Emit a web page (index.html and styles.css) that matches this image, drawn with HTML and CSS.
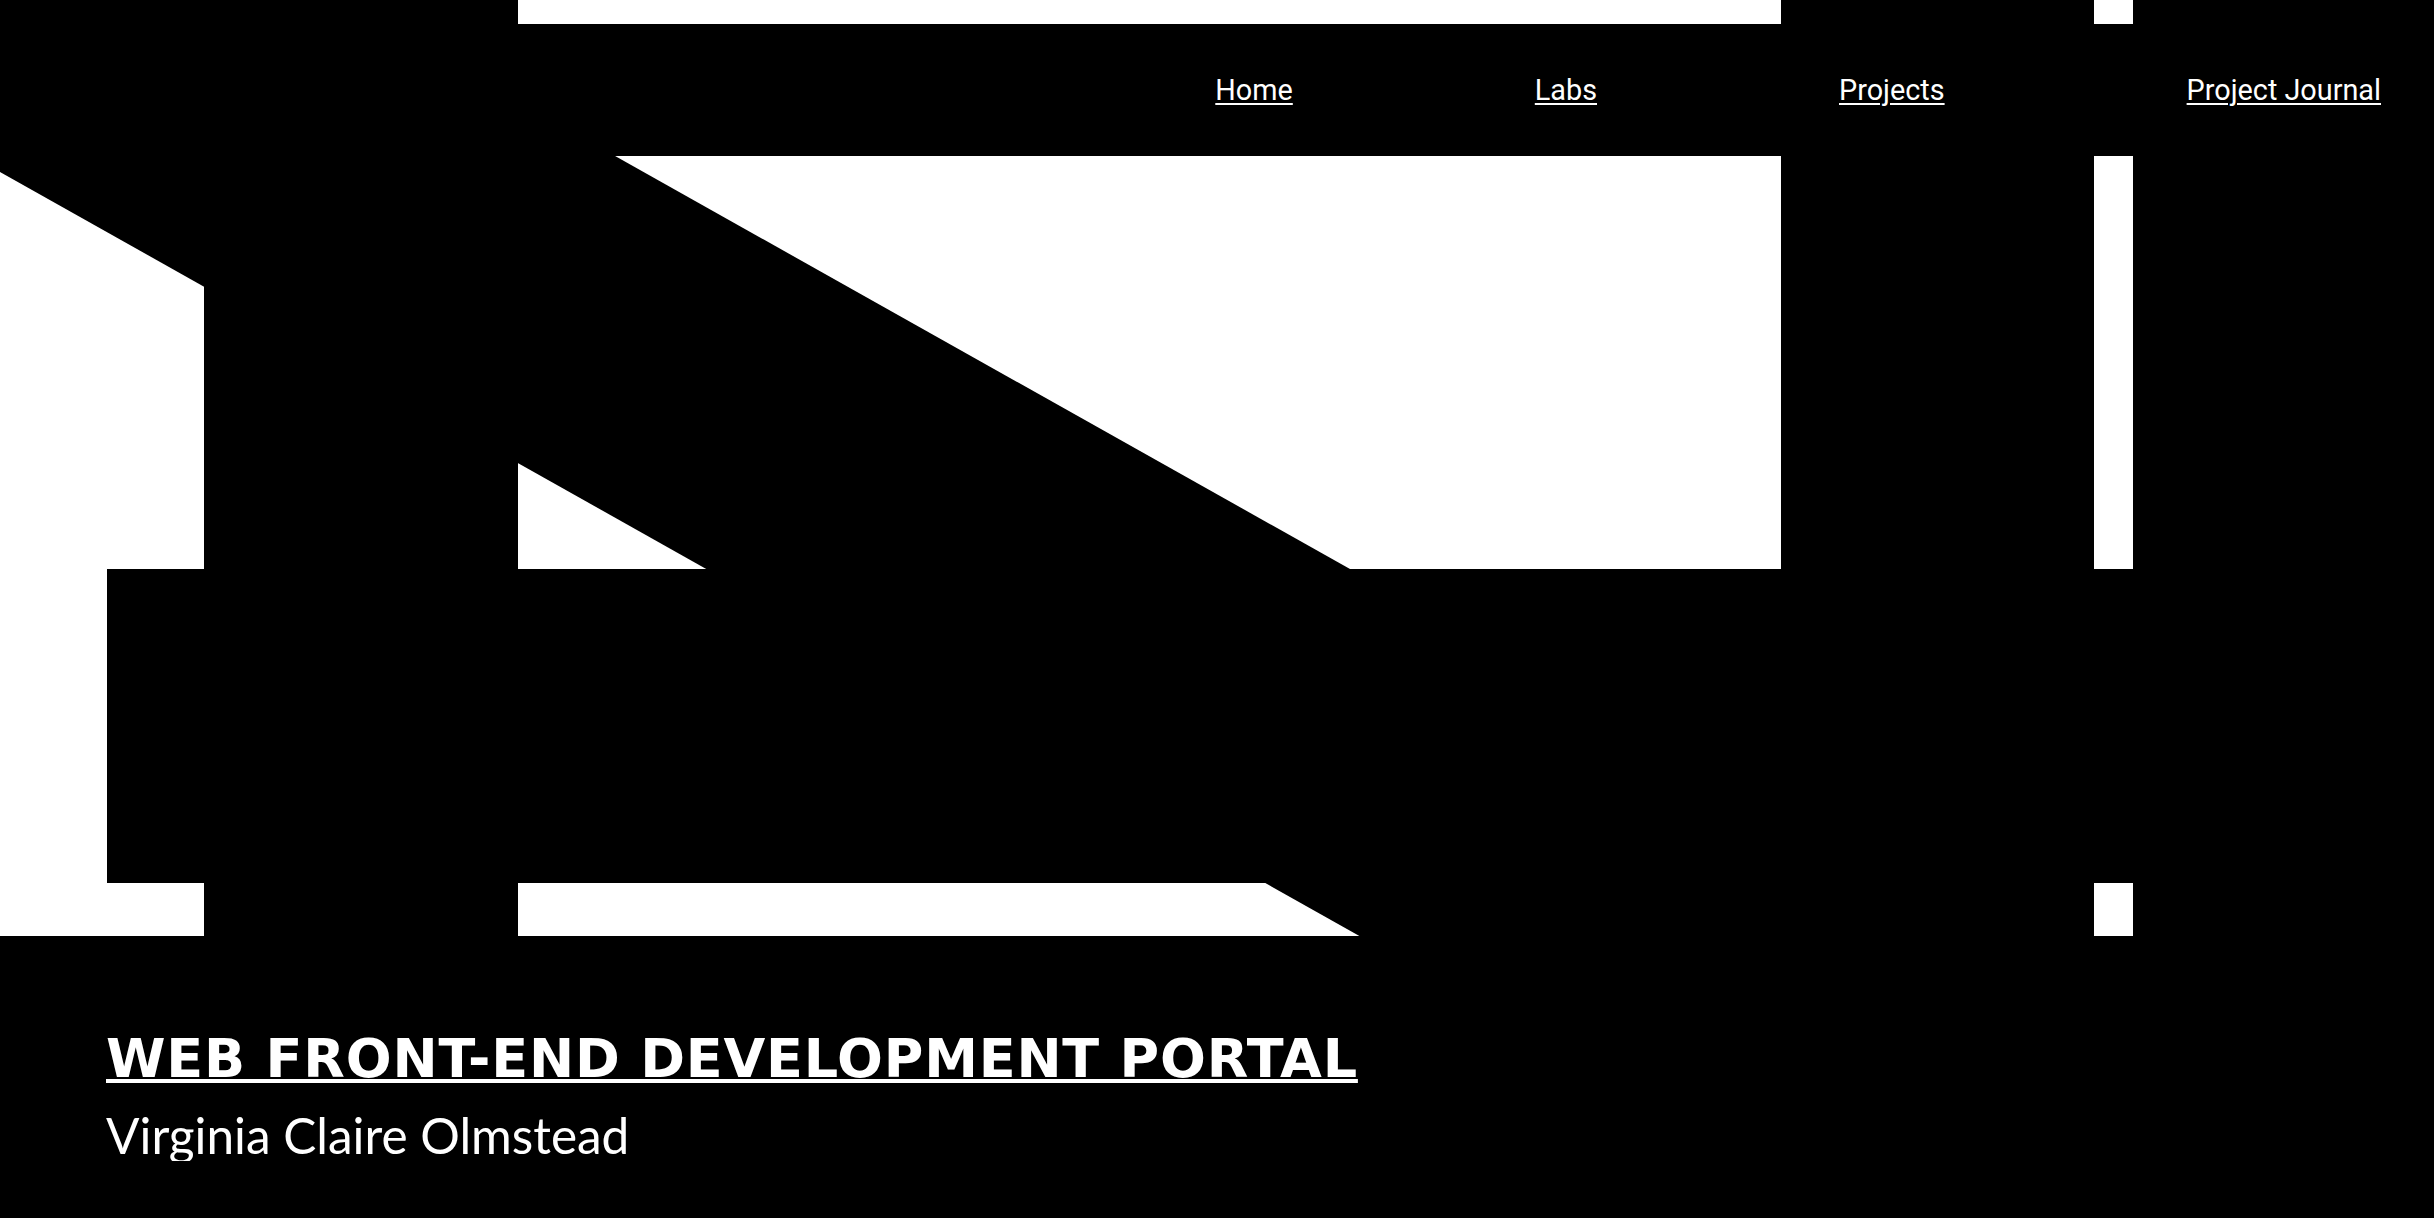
FILE: index.html
```html
<!DOCTYPE html>
<html lang="en">
<head>
<meta charset="utf-8">
<title>Web Front-End Development Portal</title>
<link rel="stylesheet" href="styles.css">
</head>
<body>
<div class="hero">
  <svg class="hero-art" viewBox="0 0 2434 936" preserveAspectRatio="none" aria-hidden="true">
    <rect x="0" y="0" width="2434" height="936" fill="#fff"/>
    <polygon points="-10,-195.3 2500,1215.3 2500,1577 -10,166.4" fill="#000"/>
    <rect x="204" y="0" width="314" height="936" fill="#000"/>
    <rect x="1781" y="0" width="313" height="936" fill="#000"/>
    <rect x="2133" y="0" width="301" height="936" fill="#000"/>
    <rect x="107" y="569" width="2327" height="314" fill="#000"/>
  </svg>
  <header class="site-header">
    <nav class="nav">
      <a class="nav-link" href="#">Home</a>
      <a class="nav-link" href="#">Labs</a>
      <a class="nav-link" href="#">Projects</a>
      <a class="nav-link" href="#">Project Journal</a>
    </nav>
  </header>
</div>
<main class="intro">
  <h1 class="title"><a class="title-link" href="#">WEB FRONT-END DEVELOPMENT PORTAL</a></h1>
  <p class="author">Virginia Claire Olmstead</p>
</main>
</body>
</html>
```
FILE: styles.css
```css
html, body {
  margin: 0;
  padding: 0;
  background: #000;
  color: #fff;
}

.hero {
  position: relative;
  height: 936px;
  overflow: hidden;
}

.hero-art {
  position: absolute;
  top: 0;
  left: 0;
  width: 100%;
  height: 100%;
  display: block;
}

.site-header {
  position: relative;
  margin-top: 24px;
  height: 132px;
  background: #000;
  display: flex;
  align-items: center;
  justify-content: flex-end;
  padding-right: 53px;
}

.nav {
  display: flex;
  gap: 242px;
  align-items: center;
}

.nav-link {
  font-family: Roboto, "Liberation Sans", sans-serif;
  font-size: 28.8px;
  color: #fff;
  text-decoration: underline;
  text-decoration-thickness: 2px;
  text-underline-offset: 3px;
}

.intro {
  padding: 96px 106px 0;
}

.title {
  margin: 0;
  font-family: "DejaVu Sans", sans-serif;
  font-weight: 700;
  font-size: 54px;
  letter-spacing: 0.8px;
  line-height: 1;
}

.title-link {
  color: #fff;
  text-decoration: underline;
  text-decoration-thickness: 4px;
  text-underline-offset: 2px;
}

.author {
  margin: 25px 0 0;
  font-family: Lato, sans-serif;
  font-weight: 400;
  font-size: 49.5px;
  line-height: 1;
}
```
